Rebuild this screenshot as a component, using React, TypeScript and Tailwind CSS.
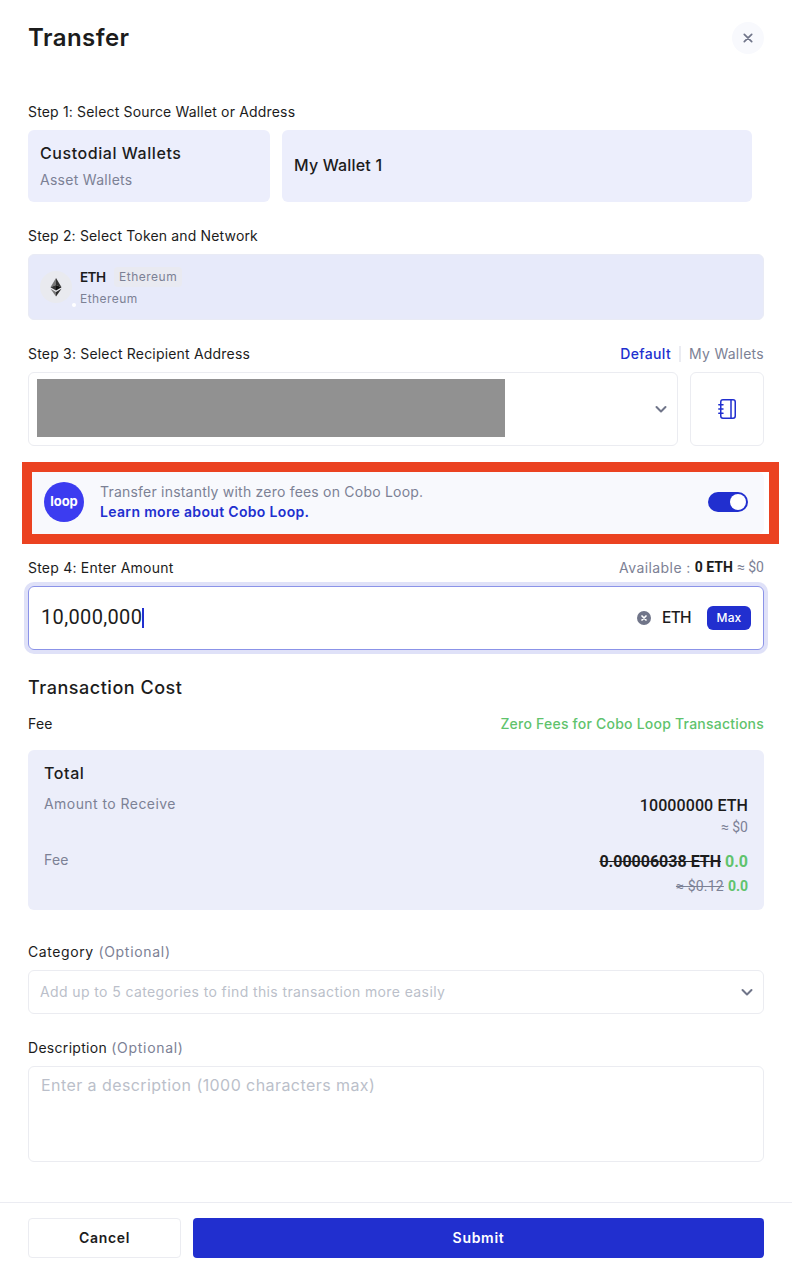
import type { ReactNode } from "react";

const num = "font-['Roboto',sans-serif]";

function Label({ children, className = "" }: { children: ReactNode; className?: string }) {
  return <div className={`h-5 text-sm leading-5 whitespace-nowrap ${className}`}>{children}</div>;
}

function Chevron() {
  return (
    <svg width="12" height="8" viewBox="0 0 12 8" fill="none" stroke="#707589" strokeWidth="2" strokeLinecap="round" strokeLinejoin="round">
      <path d="M1.5 2L6 6.5L10.5 2" />
    </svg>
  );
}

function EthIcon() {
  return (
    <svg width="12" height="19" viewBox="0 0 12 19">
      <path d="M6 0L0.5 9.3L6 6.9Z" fill="#777777" />
      <path d="M6 0V6.9L11.5 9.3Z" fill="#333333" />
      <path d="M0.5 9.3L6 12.6V6.9Z" fill="#333333" />
      <path d="M11.5 9.3L6 12.6V6.9Z" fill="#111111" />
      <path d="M0.5 10.8L6 18.5V14Z" fill="#777777" />
      <path d="M11.5 10.8L6 18.5V14Z" fill="#2c2c2c" />
    </svg>
  );
}

function AddressBook() {
  return (
    <svg width="18" height="20" viewBox="0 0 18 20" fill="none" stroke="#212fcf" strokeWidth="1.5" strokeLinecap="round">
      <rect x="2.75" y="0.75" width="14.5" height="18.5" rx="2.2" />
      <path d="M13 1V19M0.8 5.8H5M0.8 10H5M0.8 14.2H5" />
    </svg>
  );
}

export default function App() {
  return (
    <div className="flex h-[1268px] w-[792px] flex-col overflow-hidden bg-white font-['Inter',sans-serif] text-[#1c1c1c]">
      <main className="flex flex-col px-7 pt-[22px]">
        <header className="flex h-8 items-center justify-between">
          <h1 className="text-2xl font-semibold tracking-[0.45px]">Transfer</h1>
          <button className="flex size-8 items-center justify-center rounded-full bg-[#f8f9fd]">
            <svg width="10" height="10" viewBox="0 0 10 10" stroke="#707589" strokeWidth="1.7" strokeLinecap="round">
              <path d="M1.3 1.3L8.7 8.7M8.7 1.3L1.3 8.7" />
            </svg>
          </button>
        </header>

        <Label className="mt-12 tracking-[0.17px]">Step 1: Select Source Wallet or Address</Label>
        <div className="mt-2 mr-3 flex h-[72px] gap-3">
          <div className="flex w-[242px] flex-col rounded-md bg-[#eceefc] px-3 pt-[11px]">
            <div className="h-6 text-base leading-6 font-medium tracking-[0.56px]">Custodial Wallets</div>
            <div className="mt-[5px] text-sm leading-5 tracking-[0.28px] text-[#7c8195]">Asset Wallets</div>
          </div>
          <div className="flex flex-1 items-center rounded-md bg-[#eceefc] px-3 pb-0.5 text-base font-medium tracking-[0.18px]">My Wallet 1</div>
        </div>

        <Label className="mt-6 tracking-[0.16px]">Step 2: Select Token and Network</Label>
        <div className="mt-2 flex h-[66px] items-center rounded-md border border-[#e9ebf5] bg-[#e7eafa] pl-[11px]">
          <div className="relative flex size-8 items-center justify-center rounded-full bg-[#e9eaef]">
            <EthIcon />
            <span className="absolute -right-1 -bottom-1 size-1 rounded-full bg-white" />
          </div>
          <div className="ml-2 flex flex-col gap-0.5 pt-0.5">
            <div className="flex h-5 items-center">
              <span className="w-[26px] text-[13.5px] font-semibold tracking-[-0.6px]">ETH</span>
              <span className="ml-2 rounded bg-[#e9eaf1] px-[5px] text-xs leading-5 tracking-[0.5px] text-[#7c8195]">Ethereum</span>
            </div>
            <div className="h-5 text-xs leading-5 tracking-[0.45px] text-[#7c8195]">Ethereum</div>
          </div>
        </div>

        <div className="mt-6 flex h-5 items-center justify-between">
          <Label className="tracking-[0.19px]">Step 3: Select Recipient Address</Label>
          <div className="flex h-5 items-center text-sm leading-5">
            <span className="font-medium tracking-[0.36px] text-[#212fcf]">Default</span>
            <span className="mx-2 h-4 w-0.5 bg-[#ebecf2]" />
            <span className="tracking-[0.27px] text-[#7c8195]">My Wallets</span>
          </div>
        </div>
        <div className="mt-2 flex h-[74px] gap-3">
          <div className="flex flex-1 items-center justify-between rounded-md border border-[#ebecf1] pr-[10px] pl-2">
            <div className="mb-0.5 h-[58px] w-[468px] bg-[#919191]" />
            <Chevron />
          </div>
          <div className="flex w-[74px] items-center justify-center rounded-md border border-[#ebecf1]">
            <AddressBook />
          </div>
        </div>

        <section className="-mr-[15px] -ml-1.5 mt-4 h-[82px] border-[10px] border-[#eb4221] bg-white pr-[5px]">
          <div className="flex h-full items-center rounded-r-md bg-[#f8f9fd] pr-4 pb-0.5 pl-3">
            <div className="flex size-10 items-center justify-center rounded-full bg-[#3c3cf0] pb-0.5 text-[13px] leading-none font-bold text-white">
              loop
            </div>
            <div className="ml-4 text-sm leading-5">
              <div className="tracking-[0.21px] text-[#7c8195]">Transfer instantly with zero fees on Cobo Loop.</div>
              <div className="font-semibold tracking-[0.33px] text-[#212fcf]">Learn more about Cobo Loop.</div>
            </div>
            <div className="ml-auto flex h-5 w-10 items-center justify-end rounded-full bg-[#212fcf] pr-0.5">
              <span className="size-4 rounded-full bg-white" />
            </div>
          </div>
        </section>

        <div className="mt-[14px] flex h-5 justify-between">
          <Label className="tracking-[0.22px]">Step 4: Enter Amount</Label>
          <div className="flex gap-1 text-sm leading-5 text-[#7c8195]">
            <span className="tracking-[0.42px]">Available :</span>
            <span className={`${num} -mt-px font-bold text-[#1c1c1c]`}>0 ETH</span>
            <span className={`${num} -mt-px`}>≈ $0</span>
          </div>
        </div>
        <div className="mt-2 flex h-16 items-center rounded-md border border-[#8b93e8] px-3 ring-4 ring-[#dfe1f8]">
          <span className={`${num} pb-0.5 text-xl font-normal tracking-[0.35px]`}>10,000,000</span>
          <span className="h-5 w-0.5 bg-[#212fcf]" />
          <svg className="ml-auto" width="14" height="14" viewBox="0 0 14 14">
            <circle cx="7" cy="7" r="7" fill="#707589" />
            <path d="M5 5L9 9M9 5L5 9" stroke="#fff" strokeWidth="1.7" strokeLinecap="round" />
          </svg>
          <span className="ml-[11px] w-[30px] text-[15.5px] font-medium tracking-[-0.7px]">ETH</span>
          <span className="ml-[15px] flex h-6 w-11 items-center justify-center rounded-md bg-[#212fcf] text-xs font-medium tracking-[0.1px] text-white">Max</span>
        </div>

        <h2 className="mt-6 h-7 text-lg leading-7 font-medium tracking-[0.53px]">Transaction Cost</h2>
        <div className="mt-3 flex h-5 justify-between">
          <Label className="tracking-[0.2px]">Fee</Label>
          <Label className="font-medium tracking-[0.22px] text-[#5fc36d]">Zero Fees for Cobo Loop Transactions</Label>
        </div>

        <section className="mt-4 flex h-40 flex-col rounded-md bg-[#eceefa] px-4 pt-[11px]">
          <h3 className="h-6 text-base leading-6 font-medium tracking-[0.6px]">Total</h3>
          <div className="mt-[9px] flex h-12 justify-between">
            <span className="text-sm leading-5 tracking-[0.44px] text-[#7c8195]">Amount to Receive</span>
            <div className={`${num} text-right`}>
              <div className="h-6 text-base leading-6 font-medium tracking-[0.1px]">10000000 ETH</div>
              <div className="-mt-px text-sm leading-5 text-[#7c8195]">≈ $0</div>
            </div>
          </div>
          <div className="mt-2 flex justify-between">
            <span className="text-sm leading-5 tracking-[0.2px] text-[#7c8195]">Fee</span>
            <div className={`${num} flex flex-col items-end`}>
              <div className="flex h-6 gap-1 text-base leading-6 font-bold">
                <span className="line-through">0.00006038 ETH</span>
                <span className="text-[#5fc36d]">0.0</span>
              </div>
              <div className="flex gap-1 text-sm leading-6">
                <span className="tracking-[0.2px] text-[#7c8195] line-through">≈ $0.12</span>
                <span className="font-bold text-[#5fc36d]">0.0</span>
              </div>
            </div>
          </div>
        </section>

        <Label className="mt-8 tracking-[0.6px]">
          Category <span className="tracking-[0.7px] text-[#7c8195]">(Optional)</span>
        </Label>
        <div className="mt-2 flex h-11 items-center justify-between rounded-md border border-[#ebecf1] pr-[10px] pl-[11px]">
          <span className="text-sm tracking-[0.39px] text-[#bbbfca]">Add up to 5 categories to find this transaction more easily</span>
          <Chevron />
        </div>

        <Label className="mt-6 tracking-[0.3px]">
          Description <span className="tracking-[0.7px] text-[#7c8195]">(Optional)</span>
        </Label>
        <div className="mt-2 h-24 rounded-md border border-[#ebecf1] px-3 pt-1.5 text-base leading-6 tracking-[0.43px] text-[#bbbfca]">
          Enter a description (1000 characters max)
        </div>
      </main>

      <footer className="mt-10 flex gap-3 border-t border-[#ebecf2] px-7 pt-[15px] text-sm font-semibold">
        <button className="h-10 w-[153px] rounded border border-[#ebecf1] tracking-[0.65px]">Cancel</button>
        <button className="h-10 flex-1 rounded bg-[#212fcf] tracking-[0.7px] text-white">Submit</button>
      </footer>
    </div>
  );
}
